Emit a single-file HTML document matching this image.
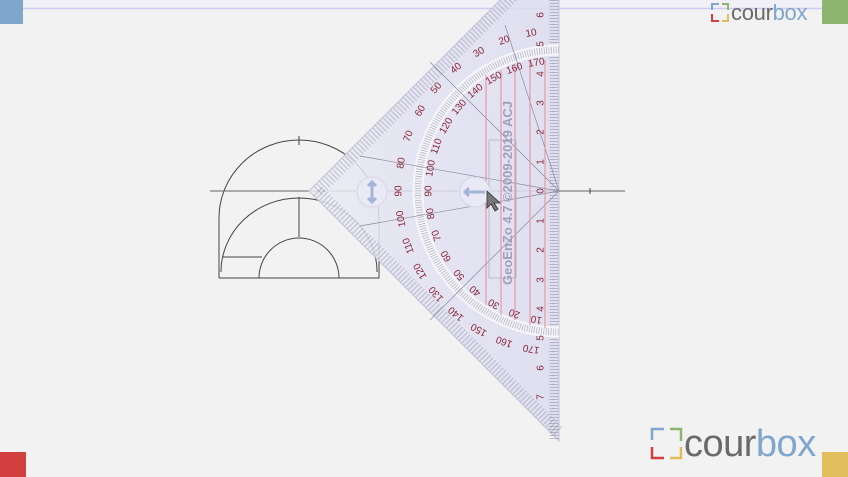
<!DOCTYPE html>
<html><head><meta charset="utf-8"><style>
html,body{margin:0;padding:0;width:848px;height:477px;overflow:hidden;background:#f2f2f3;}
svg{display:block}
.lb{font-family:"Liberation Sans",sans-serif;font-size:10px;fill:#8a2638;text-anchor:middle;dominant-baseline:middle}
.rn{font-family:"Liberation Sans",sans-serif;font-size:10px;fill:#8a2638;text-anchor:middle;dominant-baseline:middle}
</style></head><body>
<svg width="848" height="477" viewBox="0 0 848 477">
<defs>
<linearGradient id="tg" x1="0" y1="0" x2="1" y2="0">
<stop offset="0" stop-color="#ececf4"/>
<stop offset="0.4" stop-color="#e2e2f2"/>
<stop offset="1" stop-color="#dcdcf0"/>
</linearGradient>
</defs>
<rect width="848" height="477" fill="#f2f2f3"/>
<rect width="848" height="9" fill="#f0f0f6"/>
<line x1="0" y1="8.5" x2="848" y2="8.5" stroke="#cfcaf2" stroke-width="1.5"/>
<rect x="0" y="0" width="23" height="24" fill="#7fa6cc"/>
<rect x="822" y="0" width="26" height="24" fill="#8db56f"/>
<rect x="0" y="452" width="26" height="25" fill="#d23f3f"/>
<rect x="822" y="452" width="26" height="25" fill="#e2bd5c"/>

<!-- logos -->
<g transform="translate(711,3)">
<path d="M1 7V1h7" fill="none" stroke="#7fa6cc" stroke-width="2"/>
<path d="M11 1h6v6" fill="none" stroke="#8db56f" stroke-width="2"/>
<path d="M1 11v7h7" fill="none" stroke="#d23f3f" stroke-width="2"/>
<path d="M11 18h6v-7" fill="none" stroke="#e2bd5c" stroke-width="2"/>
<text x="20" y="17" font-family="Liberation Sans,sans-serif" font-size="22" fill="#6a6a6a" letter-spacing="-0.3">cour<tspan fill="#7fa6cc">box</tspan></text>
</g>
<g transform="translate(651,428)">
<path d="M1 12V1h12" fill="none" stroke="#7fa6cc" stroke-width="2.5"/>
<path d="M19 1h11v12" fill="none" stroke="#8db56f" stroke-width="2.5"/>
<path d="M1 19v11h12" fill="none" stroke="#d23f3f" stroke-width="2.5"/>
<path d="M19 30h11v-11" fill="none" stroke="#e2bd5c" stroke-width="2.5"/>
<text x="33" y="28" font-family="Liberation Sans,sans-serif" font-size="38" fill="#6a6a6a" letter-spacing="-0.5">cour<tspan fill="#7fa6cc">box</tspan></text>
</g>

<!-- drawing -->
<g fill="none" stroke="#444" stroke-width="1">
<path d="M219 278V218A80 78 0 0 1 379 218V278H219"/>
<path d="M221 272A78 74 0 0 1 377 272"/>
<path d="M259 278A40 40 0 0 1 339 278"/>
<line x1="299" y1="197" x2="299" y2="237"/>
<line x1="299" y1="136" x2="299" y2="145"/>
<line x1="222" y1="257" x2="262" y2="257"/>
<line x1="210" y1="191" x2="625" y2="191" stroke="#666"/>
</g>

<!-- set square -->
<polygon points="309,191 559,-59 559,441" fill="url(#tg)" fill-opacity="0.85" stroke="#c4c4da"/>
<!-- edge ticks -->
<g stroke="#8a8aa0" stroke-width="1">
<line x1="318" y1="191" x2="559" y2="-50" stroke-width="12" stroke-dasharray="1 2.6" opacity="0.45"/>
<line x1="318" y1="191" x2="559" y2="432" stroke-width="12" stroke-dasharray="1 2.6" opacity="0.45"/>
<line x1="554" y1="0" x2="554" y2="441" stroke-width="9" stroke-dasharray="1 2" opacity="0.5"/>
</g>
<!-- arc scale -->
<path d="M559 50A141 141 0 0 0 559 332" fill="none" stroke="#f6f6fa" stroke-width="11"/>
<path d="M559 50A141 141 0 0 0 559 332" fill="none" stroke="#8a8aa0" stroke-width="7" stroke-dasharray="0.8 1.6" opacity="0.6"/>
<!-- radial lines -->
<g stroke="#8a8aa0" stroke-width="0.7">
<line x1="559" y1="191" x2="430" y2="62"/>
<line x1="559" y1="191" x2="430" y2="320"/>
<line x1="559" y1="191" x2="360" y2="156"/>
<line x1="559" y1="191" x2="360" y2="226"/>
<line x1="559" y1="191" x2="505" y2="25"/>
</g>
<!-- pink lines -->
<g stroke="#e88a9a" stroke-width="1">
<line x1="486" y1="75" x2="486" y2="305"/>
<line x1="501" y1="70" x2="501" y2="315"/>
<line x1="515" y1="65" x2="515" y2="320"/>
<line x1="530" y1="62" x2="530" y2="325"/>
<line x1="545" y1="60" x2="545" y2="328"/>
</g>
<rect x="489" y="140" width="27" height="138" fill="none" stroke="#b8b8c8"/>
<text transform="translate(512,193) rotate(-90)" font-family="Liberation Sans,sans-serif" font-size="13" font-weight="bold" fill="#a0a0bc" text-anchor="middle">GeoEnZo 4.7 ©2009-2019 ACJ</text>
<circle cx="372" cy="192" r="15" fill="#eaeaf6" stroke="#d4d4e6"/>
<circle cx="475" cy="192" r="15" fill="#eaeaf6" stroke="#d4d4e6"/>
<path d="M372 182v20M368 186l4-4 4 4M368 198l4 4 4-4" stroke="#a4b4d8" stroke-width="3" fill="none"/>
<path d="M465 192h20M469 188l-4 4 4 4" stroke="#a4b4d8" stroke-width="3" fill="none"/>
<path d="M487 191l0 17 4-4 4 7 3-2-4-6 6 0z" fill="#777" stroke="#333" stroke-width="0.8"/>

<g class="lb">
<text transform="translate(559,191) rotate(80) translate(-160,0) rotate(-90)">10</text>
<text transform="translate(559,191) rotate(70) translate(-160,0) rotate(-90)">20</text>
<text transform="translate(559,191) rotate(60) translate(-160,0) rotate(-90)">30</text>
<text transform="translate(559,191) rotate(50) translate(-160,0) rotate(-90)">40</text>
<text transform="translate(559,191) rotate(40) translate(-160,0) rotate(-90)">50</text>
<text transform="translate(559,191) rotate(30) translate(-160,0) rotate(-90)">60</text>
<text transform="translate(559,191) rotate(20) translate(-160,0) rotate(-90)">70</text>
<text transform="translate(559,191) rotate(10) translate(-160,0) rotate(-90)">80</text>
<text transform="translate(559,191) rotate(0) translate(-160,0) rotate(-90)">90</text>
<text transform="translate(559,191) rotate(-10) translate(-160,0) rotate(-90)">100</text>
<text transform="translate(559,191) rotate(-20) translate(-160,0) rotate(-90)">110</text>
<text transform="translate(559,191) rotate(-30) translate(-160,0) rotate(-90)">120</text>
<text transform="translate(559,191) rotate(-40) translate(-160,0) rotate(-90)">130</text>
<text transform="translate(559,191) rotate(-50) translate(-160,0) rotate(-90)">140</text>
<text transform="translate(559,191) rotate(-60) translate(-160,0) rotate(-90)">150</text>
<text transform="translate(559,191) rotate(-70) translate(-160,0) rotate(-90)">160</text>
<text transform="translate(559,191) rotate(-80) translate(-160,0) rotate(-90)">170</text>
<text transform="translate(559,191) rotate(80) translate(-130,0) rotate(-90)">170</text>
<text transform="translate(559,191) rotate(70) translate(-130,0) rotate(-90)">160</text>
<text transform="translate(559,191) rotate(60) translate(-130,0) rotate(-90)">150</text>
<text transform="translate(559,191) rotate(50) translate(-130,0) rotate(-90)">140</text>
<text transform="translate(559,191) rotate(40) translate(-130,0) rotate(-90)">130</text>
<text transform="translate(559,191) rotate(30) translate(-130,0) rotate(-90)">120</text>
<text transform="translate(559,191) rotate(20) translate(-130,0) rotate(-90)">110</text>
<text transform="translate(559,191) rotate(10) translate(-130,0) rotate(-90)">100</text>
<text transform="translate(559,191) rotate(0) translate(-130,0) rotate(-90)">90</text>
<text transform="translate(559,191) rotate(-10) translate(-130,0) rotate(-90)">80</text>
<text transform="translate(559,191) rotate(-20) translate(-130,0) rotate(-90)">70</text>
<text transform="translate(559,191) rotate(-30) translate(-130,0) rotate(-90)">60</text>
<text transform="translate(559,191) rotate(-40) translate(-130,0) rotate(-90)">50</text>
<text transform="translate(559,191) rotate(-50) translate(-130,0) rotate(-90)">40</text>
<text transform="translate(559,191) rotate(-60) translate(-130,0) rotate(-90)">30</text>
<text transform="translate(559,191) rotate(-70) translate(-130,0) rotate(-90)">20</text>
<text transform="translate(559,191) rotate(-80) translate(-130,0) rotate(-90)">10</text>
</g>
<g class="rn">
<text transform="translate(541,15) rotate(-90)">6</text>
<text transform="translate(541,44) rotate(-90)">5</text>
<text transform="translate(541,74) rotate(-90)">4</text>
<text transform="translate(541,103) rotate(-90)">3</text>
<text transform="translate(541,132) rotate(-90)">2</text>
<text transform="translate(541,162) rotate(-90)">1</text>
<text transform="translate(541,191) rotate(-90)">0</text>
<text transform="translate(541,221) rotate(-90)">1</text>
<text transform="translate(541,250) rotate(-90)">2</text>
<text transform="translate(541,280) rotate(-90)">3</text>
<text transform="translate(541,309) rotate(-90)">4</text>
<text transform="translate(541,338) rotate(-90)">5</text>
<text transform="translate(541,368) rotate(-90)">6</text>
<text transform="translate(541,397) rotate(-90)">7</text>
</g>
<line x1="559" y1="191" x2="625" y2="191" stroke="#666"/>
<line x1="590" y1="188" x2="590" y2="194" stroke="#444"/>
</svg>
</body></html>
